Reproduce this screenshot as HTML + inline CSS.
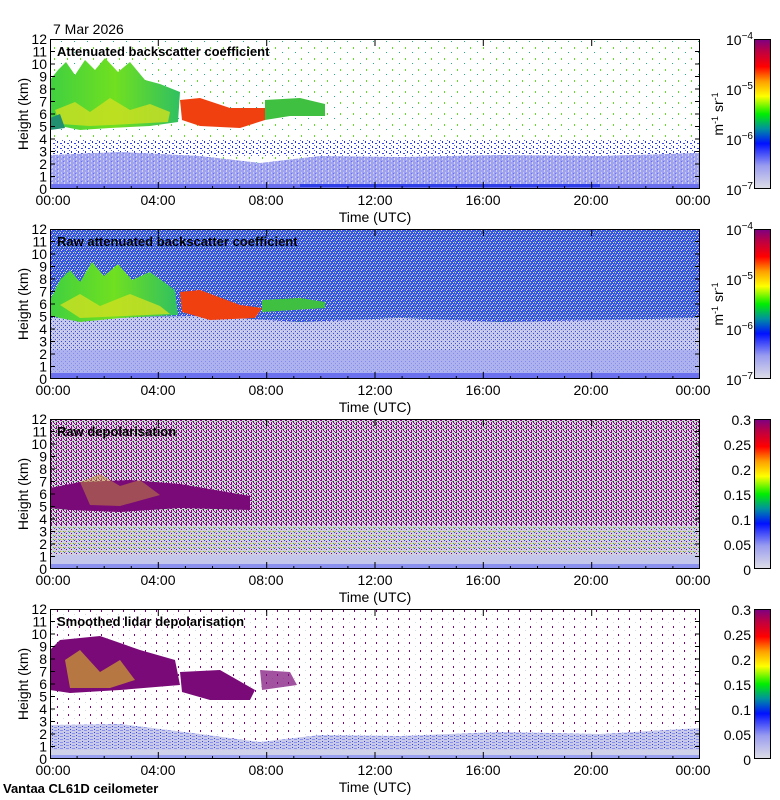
<!DOCTYPE html>
<html><head><meta charset="utf-8"><style>
html,body{margin:0;padding:0;background:#fff;width:780px;height:800px;overflow:hidden}
svg{display:block}
text{font-family:"Liberation Sans",sans-serif;font-size:14px;fill:#000}
.t{font-weight:bold;font-size:13px}
</style></head><body>
<svg width="780" height="800" viewBox="0 0 780 800" xmlns="http://www.w3.org/2000/svg">
<defs>
<linearGradient id="cb" x1="0" y1="1" x2="0" y2="0">
<stop offset="0" stop-color="#dcdce6"/><stop offset="0.15" stop-color="#9a9cf0"/><stop offset="0.3" stop-color="#0010ff"/><stop offset="0.4" stop-color="#0090a0"/><stop offset="0.5" stop-color="#00ee00"/><stop offset="0.62" stop-color="#ffff00"/><stop offset="0.72" stop-color="#ffa000"/><stop offset="0.82" stop-color="#ff0000"/><stop offset="0.92" stop-color="#c00040"/><stop offset="1" stop-color="#800080"/>
</linearGradient>
<pattern id="pLow1" width="6" height="4" patternUnits="userSpaceOnUse"><rect width="6" height="4" fill="#9ea2f0"/><rect x="1" y="0" width="1" height="2" fill="#c8cae8"/><rect x="4" y="2" width="1" height="2" fill="#d4d4e6"/><rect x="3" y="1" width="1" height="1" fill="#6a70ee"/></pattern>
<pattern id="pSpk1" width="7" height="5" patternUnits="userSpaceOnUse"><rect width="7" height="5" fill="#fff"/><rect x="1" y="1" width="1" height="2" fill="#2030ee"/><rect x="4" y="3" width="2" height="1" fill="#3344ee"/><rect x="6" y="0" width="1" height="1" fill="#5060f0"/></pattern>
<pattern id="pTop1" width="13" height="11" patternUnits="userSpaceOnUse"><rect width="13" height="11" fill="#fff"/><rect x="2" y="3" width="1" height="2" fill="#60e020"/><rect x="9" y="8" width="1" height="1" fill="#20b080"/></pattern>
<pattern id="pBlue" width="5" height="5" patternUnits="userSpaceOnUse"><rect width="5" height="5" fill="#3a50ea"/><rect x="1" y="0" width="1" height="1" fill="#e0e0ea"/><rect x="3" y="2" width="1" height="1" fill="#e0e0ea"/><rect x="0" y="2" width="1" height="1" fill="#c8cae8"/><rect x="2" y="4" width="1" height="1" fill="#e0e0ea"/><rect x="0" y="3" width="1" height="1" fill="#20a070"/><rect x="4" y="4" width="1" height="1" fill="#9aa0f0"/><rect x="4" y="1" width="1" height="1" fill="#40c040"/></pattern>
<pattern id="pMid2" width="4" height="4" patternUnits="userSpaceOnUse"><rect width="4" height="4" fill="#c4c6ea"/><rect x="1" y="1" width="1" height="1" fill="#3048e8"/><rect x="3" y="3" width="1" height="1" fill="#4050ea"/><rect x="0" y="3" width="1" height="1" fill="#e0e0ea"/></pattern>
<pattern id="pPur" width="5" height="4" patternUnits="userSpaceOnUse"><rect width="5" height="4" fill="#d6d6de"/><rect x="0" y="0" width="2" height="1" fill="#800080"/><rect x="3" y="1" width="1" height="2" fill="#800080"/><rect x="1" y="2" width="1" height="2" fill="#800080"/><rect x="4" y="3" width="1" height="1" fill="#800080"/><rect x="2" y="1" width="1" height="1" fill="#30c040"/></pattern>
<pattern id="pPurLow" width="5" height="4" patternUnits="userSpaceOnUse"><rect width="5" height="4" fill="#d0d0e0"/><rect x="1" y="1" width="1" height="1" fill="#800080"/><rect x="3" y="3" width="1" height="1" fill="#30c040"/><rect x="4" y="0" width="1" height="1" fill="#3040ee"/><rect x="0" y="3" width="1" height="1" fill="#f0a000"/></pattern>
<pattern id="pSp4" width="11" height="8" patternUnits="userSpaceOnUse"><rect width="11" height="8" fill="#fff"/><rect x="2" y="2" width="1" height="2" fill="#800080"/><rect x="8" y="6" width="1" height="1" fill="#d8d8e0"/></pattern>
<pattern id="pLow4" width="6" height="3" patternUnits="userSpaceOnUse"><rect width="6" height="3" fill="#c8cae8"/><rect x="0" y="1" width="3" height="1" fill="#8a90f0"/><rect x="4" y="0" width="1" height="1" fill="#3040ee"/></pattern>
<linearGradient id="cloudG" x1="0" y1="0" x2="1" y2="0"><stop offset="0" stop-color="#40d040"/><stop offset="0.5" stop-color="#70e020"/><stop offset="1" stop-color="#30c060"/></linearGradient>
<g id="ticks" stroke="#000" stroke-width="1" fill="none">
<rect x="50.5" y="39.5" width="649" height="149"/>
<path d="M50 51.5h5M50 64h5M50 76.5h5M50 89h5M50 101.5h5M50 114h5M50 126.5h5M50 139h5M50 151.5h5M50 164h5M50 176.5h5M695 51.5h5M695 64h5M695 76.5h5M695 89h5M695 101.5h5M695 114h5M695 126.5h5M695 139h5M695 151.5h5M695 164h5M695 176.5h5"/>
<path d="M158.3 189v-7M266.7 189v-7M375 189v-7M483.3 189v-7M591.7 189v-7M158.3 39v7M266.7 39v7M375 39v7M483.3 39v7M591.7 39v7"/>
<path d="M77.1 189v-3M104.2 189v-3M131.3 189v-3M185.4 189v-3M212.5 189v-3M239.6 189v-3M293.8 189v-3M320.8 189v-3M347.9 189v-3M402.1 189v-3M429.2 189v-3M456.3 189v-3M510.4 189v-3M537.5 189v-3M564.6 189v-3M618.8 189v-3M645.8 189v-3M672.9 189v-3"/>
<rect x="754.5" y="39.5" width="16" height="149"/>
</g>
</defs>

<!-- Panel 1 -->
<g>
<rect x="50" y="39" width="650" height="150" fill="url(#pTop1)"/>
<rect x="50" y="139" width="650" height="17" fill="url(#pSpk1)"/>
<path d="M50 155 L120 152 L200 156 L260 163 L320 156 L400 157 L500 155 L600 156 L700 153 L700 189 L50 189Z" fill="url(#pLow1)"/>
<rect x="50" y="184" width="650" height="5" fill="#6a70ee"/>
<rect x="300" y="184" width="300" height="3" fill="#3040e8"/>
<path d="M50 80 L58 70 L66 62 L75 75 L85 60 L95 70 L105 58 L118 72 L130 62 L145 80 L160 84 L180 92 L178 122 L150 126 L110 128 L80 130 L60 126 L50 128Z" fill="url(#cloudG)"/>
<path d="M55 110 L75 102 L90 112 L110 98 L130 110 L150 104 L170 112 L168 122 L130 124 L90 126 L60 124Z" fill="#d0e020" opacity="0.8"/>
<path d="M180 100 L200 98 L230 108 L265 108 L265 120 L240 128 L200 126 L182 120Z" fill="#f04010"/>
<path d="M265 100 L300 98 L325 104 L325 116 L290 116 L265 120Z" fill="#40c040"/>
<path d="M50 118 L60 114 L65 128 L50 130Z" fill="#209070"/>
</g>
<use href="#ticks"/>
<rect x="755" y="40" width="15" height="148" fill="url(#cb)"/>

<!-- Panel 2 -->
<g>
<rect x="50" y="229" width="650" height="150" fill="url(#pBlue)"/>
<path d="M50 318 L200 316 L300 322 L400 318 L500 322 L700 318 L700 379 L50 379Z" fill="url(#pMid2)"/>
<path d="M50 350 L700 350 L700 379 L50 379Z" fill="#a4a8ee" opacity="0.7"/>
<rect x="50" y="373" width="650" height="6" fill="#6a70ee"/>
<path d="M50 300 L60 280 L70 270 L80 282 L92 262 L104 276 L118 264 L132 280 L150 272 L175 290 L178 315 L120 318 L80 322 L50 316Z" fill="url(#cloudG)"/>
<path d="M60 305 L80 294 L100 306 L130 294 L160 306 L170 314 L80 318Z" fill="#d0e020" opacity="0.8"/>
<path d="M180 292 L200 290 L240 305 L262 308 L255 318 L210 320 L182 312Z" fill="#f04010"/>
<path d="M262 300 L300 298 L325 302 L325 308 L262 312Z" fill="#40c040"/>
</g>
<use href="#ticks" y="190"/>
<rect x="755" y="230" width="15" height="148" fill="url(#cb)"/>

<!-- Panel 3 -->
<g>
<rect x="50" y="419" width="650" height="150" fill="url(#pPur)"/>
<rect x="50" y="525" width="650" height="37" fill="url(#pPurLow)"/>
<rect x="50" y="555" width="650" height="14" fill="#c4c6ea"/>
<rect x="50" y="564" width="650" height="5" fill="#8a90ee"/>
<path d="M50 488 L80 482 L130 480 L180 484 L250 496 L250 510 L180 508 L120 512 L70 510 L50 508Z" fill="#7a0a78"/>
<path d="M80 482 L100 474 L120 486 L140 480 L160 495 L120 506 L90 505Z" fill="#d0a030" opacity="0.45"/>
</g>
<use href="#ticks" y="380"/>
<rect x="755" y="420" width="15" height="148" fill="url(#cb)"/>

<!-- Panel 4 -->
<g>
<rect x="50" y="609" width="650" height="150" fill="url(#pSp4)"/>
<path d="M50 650 L60 640 L100 636 L140 650 L175 660 L180 685 L120 690 L70 693 L50 690Z" fill="#7a0a78"/>
<path d="M65 660 L80 650 L100 672 L120 660 L135 680 L110 688 L70 688Z" fill="#e0c020" opacity="0.6"/>
<path d="M180 672 L220 670 L255 690 L250 700 L210 700 L182 692Z" fill="#7a0a78"/>
<path d="M260 670 L290 672 L297 685 L262 690Z" fill="#7a0a78" opacity="0.7"/>
<path d="M50 725 L120 724 L200 734 L260 742 L320 735 L400 736 L500 732 L600 734 L700 728 L700 759 L50 759Z" fill="url(#pLow4)"/>
<rect x="50" y="750" width="650" height="9" fill="#d0d2ea"/>
<rect x="50" y="755" width="650" height="4" fill="#9aa0f0"/>
</g>
<use href="#ticks" y="570"/>
<rect x="755" y="610" width="15" height="148" fill="url(#cb)"/>

<!-- Text -->
<text x="53" y="34">7 Mar 2026</text>
<text class="t" x="57" y="56">Attenuated backscatter coefficient</text>
<text class="t" x="57" y="246">Raw attenuated backscatter coefficient</text>
<text class="t" x="57" y="436">Raw depolarisation</text>
<text class="t" x="57" y="626">Smoothed lidar depolarisation</text>
<text class="t" x="3" y="793">Vantaa CL61D ceilometer</text>

<g text-anchor="end">
<text x="47" y="44">12</text><text x="47" y="56.5">11</text><text x="47" y="69">10</text><text x="47" y="81.5">9</text><text x="47" y="94">8</text><text x="47" y="106.5">7</text><text x="47" y="119">6</text><text x="47" y="131.5">5</text><text x="47" y="144">4</text><text x="47" y="156.5">3</text><text x="47" y="169">2</text><text x="47" y="181.5">1</text><text x="47" y="194">0</text>
<text x="47" y="234">12</text><text x="47" y="246.5">11</text><text x="47" y="259">10</text><text x="47" y="271.5">9</text><text x="47" y="284">8</text><text x="47" y="296.5">7</text><text x="47" y="309">6</text><text x="47" y="321.5">5</text><text x="47" y="334">4</text><text x="47" y="346.5">3</text><text x="47" y="359">2</text><text x="47" y="371.5">1</text><text x="47" y="384">0</text>
<text x="47" y="424">12</text><text x="47" y="436.5">11</text><text x="47" y="449">10</text><text x="47" y="461.5">9</text><text x="47" y="474">8</text><text x="47" y="486.5">7</text><text x="47" y="499">6</text><text x="47" y="511.5">5</text><text x="47" y="524">4</text><text x="47" y="536.5">3</text><text x="47" y="549">2</text><text x="47" y="561.5">1</text><text x="47" y="574">0</text>
<text x="47" y="614">12</text><text x="47" y="626.5">11</text><text x="47" y="639">10</text><text x="47" y="651.5">9</text><text x="47" y="664">8</text><text x="47" y="676.5">7</text><text x="47" y="689">6</text><text x="47" y="701.5">5</text><text x="47" y="714">4</text><text x="47" y="726.5">3</text><text x="47" y="739">2</text><text x="47" y="751.5">1</text><text x="47" y="764">0</text>
<text x="751" y="425">0.3</text><text x="751" y="450">0.25</text><text x="751" y="475">0.2</text><text x="751" y="500">0.15</text><text x="751" y="525">0.1</text><text x="751" y="550">0.05</text><text x="751" y="575">0</text>
<text x="751" y="615">0.3</text><text x="751" y="640">0.25</text><text x="751" y="665">0.2</text><text x="751" y="690">0.15</text><text x="751" y="715">0.1</text><text x="751" y="740">0.05</text><text x="751" y="765">0</text>
</g>

<g text-anchor="middle">
<text x="53" y="205">00:00</text><text x="158" y="205">04:00</text><text x="266" y="205">08:00</text><text x="375" y="205">12:00</text><text x="483" y="205">16:00</text><text x="591" y="205">20:00</text><text x="693" y="205">00:00</text>
<text x="375" y="222">Time (UTC)</text>
<text x="53" y="395">00:00</text><text x="158" y="395">04:00</text><text x="266" y="395">08:00</text><text x="375" y="395">12:00</text><text x="483" y="395">16:00</text><text x="591" y="395">20:00</text><text x="693" y="395">00:00</text>
<text x="375" y="412">Time (UTC)</text>
<text x="53" y="585">00:00</text><text x="158" y="585">04:00</text><text x="266" y="585">08:00</text><text x="375" y="585">12:00</text><text x="483" y="585">16:00</text><text x="591" y="585">20:00</text><text x="693" y="585">00:00</text>
<text x="375" y="602">Time (UTC)</text>
<text x="53" y="775">00:00</text><text x="158" y="775">04:00</text><text x="266" y="775">08:00</text><text x="375" y="775">12:00</text><text x="483" y="775">16:00</text><text x="591" y="775">20:00</text><text x="693" y="775">00:00</text>
<text x="375" y="792">Time (UTC)</text>
<text transform="translate(28 114) rotate(-90)">Height (km)</text>
<text transform="translate(28 304) rotate(-90)">Height (km)</text>
<text transform="translate(28 494) rotate(-90)">Height (km)</text>
<text transform="translate(28 684) rotate(-90)">Height (km)</text>
<text transform="translate(723 114) rotate(-90)">m<tspan dy="-5" font-size="9">-1</tspan><tspan dy="5"> sr</tspan><tspan dy="-5" font-size="9">-1</tspan></text>
<text transform="translate(723 304) rotate(-90)">m<tspan dy="-5" font-size="9">-1</tspan><tspan dy="5"> sr</tspan><tspan dy="-5" font-size="9">-1</tspan></text>
</g>

<g>
<text x="726" y="45">10<tspan dy="-6" font-size="10">−4</tspan></text>
<text x="726" y="95">10<tspan dy="-6" font-size="10">−5</tspan></text>
<text x="726" y="145">10<tspan dy="-6" font-size="10">−6</tspan></text>
<text x="726" y="195">10<tspan dy="-6" font-size="10">−7</tspan></text>
<text x="726" y="235">10<tspan dy="-6" font-size="10">−4</tspan></text>
<text x="726" y="285">10<tspan dy="-6" font-size="10">−5</tspan></text>
<text x="726" y="335">10<tspan dy="-6" font-size="10">−6</tspan></text>
<text x="726" y="385">10<tspan dy="-6" font-size="10">−7</tspan></text>
</g>
</svg>
</body></html>
